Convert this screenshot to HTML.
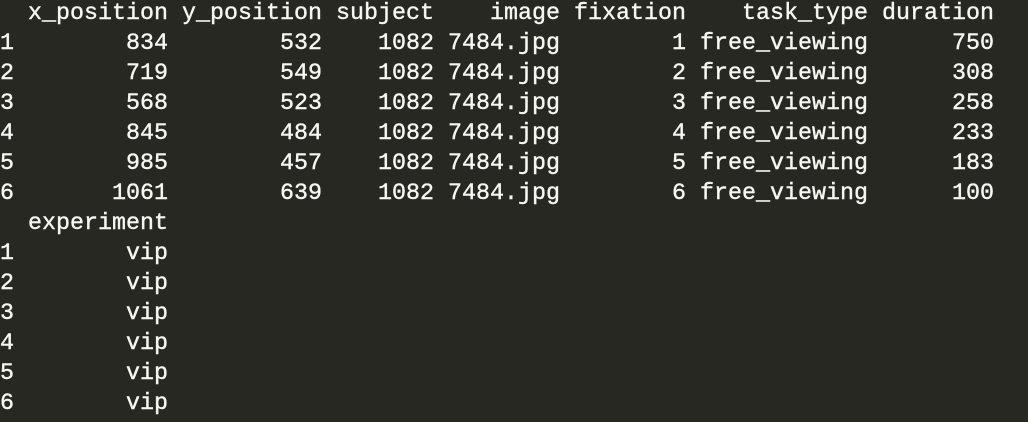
<!DOCTYPE html>
<html><head><style>
html,body{margin:0;padding:0;background:#272822;width:1028px;height:422px;overflow:hidden}
pre{position:absolute;left:0;top:-1px;margin:0;font-family:"Liberation Mono",monospace;font-size:23.33px;line-height:30px;color:#f6f6f2;white-space:pre;-webkit-text-stroke:0.4px #f6f6f2}
</style></head><body><pre>  x_position y_position subject    image fixation    task_type duration
1        834        532    1082 7484.jpg        1 free_viewing      750
2        719        549    1082 7484.jpg        2 free_viewing      308
3        568        523    1082 7484.jpg        3 free_viewing      258
4        845        484    1082 7484.jpg        4 free_viewing      233
5        985        457    1082 7484.jpg        5 free_viewing      183
6       1061        639    1082 7484.jpg        6 free_viewing      100
  experiment
1        vip
2        vip
3        vip
4        vip
5        vip
6        vip</pre></body></html>
